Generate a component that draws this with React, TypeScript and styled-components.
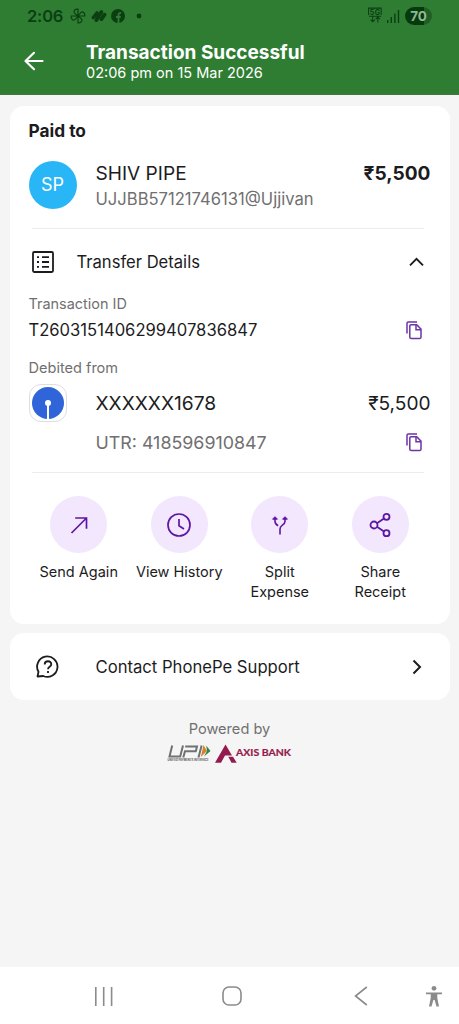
import React from "react";
import styled, { createGlobalStyle } from "styled-components";

const GlobalStyle = createGlobalStyle`
  * { box-sizing: border-box; }
  body { margin: 0; background: #f5f5f5; font-family: Inter, Roboto, sans-serif; }
  svg { display: block; flex: none; }
`;

const Screen = styled.div`
  width: 100%;
  max-width: 459px;
  height: 1024px;
  display: flex;
  flex-direction: column;
  background: #f5f5f5;
  color: #1c1c1e;
`;

const Header = styled.header`
  height: 95px;
  background: #2e7d32;
  border-bottom: 1px solid #47753f;
`;

const StatusBar = styled.div`
  display: flex;
  align-items: center;
  height: 31px;
  padding: 0 27px;
  color: #0b3f12;
`;

const Clock = styled.span`
  width: 43px;
  font-size: 16.5px;
  font-weight: 600;
  letter-spacing: -0.2px;
`;

const StatusIcons = styled.div`
  display: flex;
  align-items: center;
  gap: 5px;
`;

const NotificationIcons = styled(StatusIcons)`
  gap: 4.5px;
`;

const StatusRight = styled(StatusIcons)`
  margin-left: auto;
`;

const Battery = styled.div`
  width: 27px;
  height: 18px;
  border-radius: 9px;
  background: linear-gradient(90deg, #063a0d 70%, #1e5f26 70%);
  color: #8fb892;
  font-size: 13.5px;
  font-weight: 700;
  line-height: 18px;
  text-align: center;
`;

const TitleBar = styled.div`
  display: flex;
  align-items: center;
  height: 60px;
  padding-left: 23px;
  gap: 41px;
  color: #fff;
`;

const TitleText = styled.div`
  display: flex;
  flex-direction: column;
`;

const Text = styled.span<{ $size: number; $lh?: number; $weight?: number; $muted?: boolean }>`
  font-size: ${(p) => p.$size}px;
  line-height: ${(p) => p.$lh ?? 20}px;
  font-weight: ${(p) => p.$weight ?? 400};
  color: ${(p) => (p.$muted ? "#707070" : "inherit")};
  white-space: nowrap;
`;

const Content = styled.main`
  flex: 1;
  display: flex;
  flex-direction: column;
  padding: 11px 9px 0 10px;
  gap: 9px;
`;

const Card = styled.section`
  background: #fff;
  border-radius: 14px;
  padding: 0 19.5px 0 18.5px;
`;

const PaymentCard = styled(Card)`
  height: 518px;
`;

const Row = styled.div<{ $h: number }>`
  display: flex;
  align-items: center;
  height: ${(p) => p.$h}px;
`;

const End = styled.div<{ $inset?: number }>`
  margin-left: auto;
  margin-right: ${(p) => p.$inset ?? 0}px;
`;

const Lead = styled.div<{ $w: number; $inset?: number }>`
  width: ${(p) => p.$w}px;
  padding-left: ${(p) => p.$inset ?? 0}px;
`;

const Avatar = styled.div`
  width: 48px;
  height: 48px;
  border-radius: 50%;
  background: #29b6f6;
  color: #fff;
  font-size: 18px;
  line-height: 48px;
  text-align: center;
`;

const Recipient = styled.div`
  display: flex;
  height: 72px;
  padding-top: 5px;
`;

const RecipientText = styled.div`
  display: flex;
  flex-direction: column;
`;

const Divider = styled.hr`
  height: 1px;
  margin: 0 6.5px 0 3px;
  border: 0;
  background: #ececec;
`;

const BankBadge = styled.div`
  display: grid;
  place-items: center;
  width: 38px;
  height: 38px;
  border: 1px solid #dedede;
  border-radius: 12px;
`;

const Reference = styled(Row)`
  margin-bottom: 3px;
`;

const Actions = styled.div`
  display: grid;
  grid-template-columns: repeat(4, 1fr);
  margin: 23px 0 0;
`;

const Action = styled.div`
  display: flex;
  flex-direction: column;
  align-items: center;
  gap: 9px;
`;

const ActionCircle = styled.div`
  display: grid;
  place-items: center;
  width: 57px;
  height: 57px;
  border-radius: 50%;
  background: #f2e7fc;
  color: #5f16a5;
`;

const ActionLabel = styled.div`
  font-size: 14.5px;
  line-height: 19.5px;
  text-align: center;
  white-space: pre-line;
`;

const SupportCard = styled(Card)`
  display: flex;
  align-items: center;
  height: 67px;
`;

const Powered = styled.div`
  display: flex;
  flex-direction: column;
  align-items: center;
  padding: 9.5px 1px 0 0;
  gap: 5px;
`;

const NavBar = styled.nav`
  display: flex;
  align-items: center;
  height: 57px;
  padding: 1px 15px 0 94px;
  background: #fff;
  color: #8b8b8b;
`;

const NavSlot = styled.div<{ $w: number }>`
  width: ${(p) => p.$w}px;
`;

const CopyIcon = () => (
  <svg width="16" height="19" viewBox="0 0 16 19" fill="none" stroke="#6c35a8" strokeWidth="1.5">
    <path d="M1 12.5V2.2Q1 1 2.2 1H11" />
    <path d="M5 3.8H10.7L15 8.1V16.2Q15 17.6 13.6 17.6H5.2Q3.8 17.6 3.8 16.2V5Q3.8 3.8 5 3.8Z" />
    <path d="M10 4V8.7H15" />
  </svg>
);

const SendIcon = () => (
  <svg width="24" height="24" viewBox="0 0 24 24" fill="none" stroke="currentColor" strokeWidth="1.7">
    <path d="M4.5 20L19.5 5M8.2 5H19.5V15.8" />
  </svg>
);

const HistoryIcon = () => (
  <svg width="26" height="26" viewBox="0 0 26 26" fill="none" stroke="currentColor" strokeWidth="1.7">
    <circle cx="13" cy="13" r="11" />
    <path d="M13 7V13.8L18 17" />
  </svg>
);

const SplitIcon = () => (
  <svg width="20" height="24" viewBox="0 0 20 24" fill="none" stroke="currentColor" strokeWidth="1.6">
    <path d="M5 6V8.2C5 10.6 6.3 11.7 8.1 12.8M15 6V8.2C15 10.6 13.6 11.4 12.2 12.3C10.6 13.3 10 14.3 10 16V21.5" />
    <path d="M5 3.7L2.6 6.2H7.4ZM15 3.7L12.6 6.2H17.4Z" fill="currentColor" strokeWidth="1" />
  </svg>
);

const ShareIcon = () => (
  <svg width="24" height="26" viewBox="0 0 24 26" fill="none" stroke="currentColor" strokeWidth="1.8">
    <circle cx="6" cy="13" r="3.5" />
    <circle cx="18.5" cy="4.8" r="3" />
    <circle cx="18.5" cy="21.2" r="3" />
    <path d="M9 11.2L16 6.6M9 14.8L16 19.4" />
  </svg>
);

const actions = [
  { label: "Send Again", Icon: SendIcon },
  { label: "View History", Icon: HistoryIcon },
  { label: "Split\nExpense", Icon: SplitIcon },
  { label: "Share\nReceipt", Icon: ShareIcon },
];

const Partners = () => (
  <svg width="126" height="20" viewBox="0 0 126 20">
    <g fill="none" stroke="#717174" strokeWidth="2">
      <path d="M5.2 1.5L2.5 12.5H13.2L16 1.5" />
      <path d="M16.3 13.5L18 7.3H28.8L30 2.5H18.2" />
      <path d="M34.6 1.5L31.5 13.5" />
    </g>
    <path d="M36.5 1L40 7L33.8 13Z" fill="#d9822b" />
    <path d="M39.2 1.5L43.5 7L37 12.5L40 7Z" fill="#31834a" />
    <text x="0.5" y="17.4" fontFamily="Inter" fontSize="2.9" fontWeight="700" textLength="41" lengthAdjust="spacingAndGlyphs" fill="#555">UNIFIED PAYMENTS INTERFACE</text>
    <path d="M58.5 0.5L65 11.5H58L54 18.8H48Z" fill="#951b4e" />
    <path d="M61.3 12.8H66L69.7 18.8H64.5Z" fill="#951b4e" />
    <text x="69" y="12" fontFamily="Lato" fontSize="9.6" fontWeight="700" textLength="55" lengthAdjust="spacingAndGlyphs" fill="#951b4e" stroke="#951b4e" strokeWidth="0.2">AXIS BANK</text>
  </svg>
);

export default function App() {
  return (
    <Screen>
      <GlobalStyle />
      <Header>
        <StatusBar>
          <Clock>2:06</Clock>
          <NotificationIcons>
            <svg width="16" height="16" viewBox="0 0 16 16" fill="none" stroke="currentColor" strokeWidth="1.2">
              <path d="M8 8V1.2C4.8.7 3 3.2 4.6 5.2Q5.6 6.2 8 8ZM8 8H14.8C15.3 4.8 12.8 3 10.8 4.6Q9.8 5.6 8 8ZM8 8V14.8C11.2 15.3 13 12.8 11.4 10.8Q10.4 9.8 8 8ZM8 8H1.2C.7 11.2 3.2 13 5.2 11.4Q6.2 10.4 8 8Z" />
            </svg>
            <svg width="16" height="14" viewBox="0 0 16 14" fill="none" stroke="currentColor" strokeWidth="3.6" strokeLinecap="round">
              <path d="M2.4 8.5L6 4M5.3 11.2L10.4 3M10.4 10.2L13.6 5.6" />
            </svg>
            <svg width="14" height="14" viewBox="0 0 14 14">
              <circle cx="7" cy="7" r="7" fill="currentColor" />
              <path d="M7.5 14V6Q7.5 3.8 10 4M5 8H9.7" fill="none" stroke="#2e7d32" strokeWidth="1.8" />
            </svg>
            <svg width="20" height="6" viewBox="0 0 20 6"><circle cx="9" cy="3" r="2.4" fill="currentColor" /></svg>
          </NotificationIcons>
          <StatusRight>
            <svg width="14" height="17" viewBox="0 0 15 17" fill="none" stroke="currentColor" strokeWidth="1.1">
              <path d="M.6 8V.6H14.1V8" />
              <text x="2" y="8" fontFamily="Inter" fontSize="7.6" fontWeight="700" fill="currentColor" stroke="none" textLength="11">5G</text>
              <path d="M1 9.2H14M5 9.5V15.2M2.7 13L5 15.3L7.3 13M10.5 16V10.3M8.2 12.5L10.5 10.2L12.8 12.5" />
            </svg>
            <svg width="13" height="14" viewBox="0 0 13 14" fill="currentColor">
              <path d="M0 11H1.4V14H0ZM3.6 8H5V14H3.6ZM7.2 4.5H8.6V14H7.2ZM10.8 1H12.2V14H10.8Z" />
            </svg>
            <Battery>70</Battery>
          </StatusRight>
        </StatusBar>
        <TitleBar>
          <svg width="22" height="22" viewBox="0 0 22 22" fill="none" stroke="currentColor" strokeWidth="2.2" strokeLinecap="round" strokeLinejoin="round">
            <path d="M19.5 11H3M11 2.8L2.5 11L11 19.2" />
          </svg>
          <TitleText>
            <Text $size={19} $weight={700} $lh={23}>Transaction Successful</Text>
            <Text $size={14.5} $lh={18}>02:06 pm on 15 Mar 2026</Text>
          </TitleText>
        </TitleBar>
      </Header>
      <Content>
        <PaymentCard>
          <Row $h={50}>
            <Text $size={17.3} $weight={700}>Paid to</Text>
          </Row>
          <Recipient>
            <Lead $w={67}><Avatar>SP</Avatar></Lead>
            <RecipientText>
              <Text $size={19.1} $lh={25}>SHIV PIPE</Text>
              <Text $size={16.6} $lh={27} $muted>UJJBB57121746131@Ujjivan</Text>
            </RecipientText>
            <End><Text $size={19.1} $lh={25} $weight={700}>₹5,500</Text></End>
          </Recipient>
          <Divider />
          <Row $h={65}>
            <Lead $w={48} $inset={3}>
              <svg width="22" height="22" viewBox="0 0 22 22" fill="none" stroke="currentColor" strokeWidth="1.8">
                <rect x="1" y="1" width="20" height="20" rx="1.2" />
                <path d="M5 6.2H7M5 11H7M5 15.8H7M10 6.2H17M10 11H17M10 15.8H17" />
              </svg>
            </Lead>
            <Text $size={16.6}>Transfer Details</Text>
            <End $inset={6.5}>
              <svg width="15" height="10" viewBox="0 0 15 10" fill="none" stroke="currentColor" strokeWidth="1.9"><path d="M1 8.3L7.5 1.8L14 8.3" /></svg>
            </End>
          </Row>
          <Row $h={20}><Text $size={14.45} $muted>Transaction ID</Text></Row>
          <Row $h={32}>
            <Text $size={16.6}>T2603151406299407836847</Text>
            <End $inset={8.5}><CopyIcon /></End>
          </Row>
          <Row $h={44}><Text $size={14.55} $muted>Debited from</Text></Row>
          <Row $h={26}>
            <Lead $w={67}>
              <BankBadge>
                <svg width="32" height="32" viewBox="0 0 32 32">
                  <circle cx="16" cy="16" r="16" fill="#2f65d8" />
                  <circle cx="16" cy="16" r="3" fill="#fff" />
                  <path d="M16 16V32" stroke="#fff" strokeWidth="2" />
                </svg>
              </BankBadge>
            </Lead>
            <Text $size={19.2}>XXXXXX1678</Text>
            <End><Text $size={19.1}>₹5,500</Text></End>
          </Row>
          <Reference $h={53}>
            <Lead $w={67} />
            <Text $size={17.85} $muted>UTR: 418596910847</Text>
            <End $inset={8.5}><CopyIcon /></End>
          </Reference>
          <Divider />
          <Actions>
            {actions.map(({ label, Icon }) => (
              <Action key={label}>
                <ActionCircle><Icon /></ActionCircle>
                <ActionLabel>{label}</ActionLabel>
              </Action>
            ))}
          </Actions>
        </PaymentCard>
        <SupportCard>
          <Lead $w={67} $inset={7}>
            <svg width="24" height="24" viewBox="0 0 24 24" fill="none" stroke="currentColor" strokeWidth="1.8">
              <path d="M1.5 21.5L2.5 16.8A10.2 10.2 0 1 1 7.2 21L1.5 21.5Z" strokeLinejoin="round" />
              <path d="M8.7 9.5C8.7 5.2 15.3 5.2 15.3 9.3C15.3 11.9 12 11.7 12 14.2M12 16V18" />
            </svg>
          </Lead>
          <Text $size={16.65}>Contact PhonePe Support</Text>
          <End $inset={9}>
            <svg width="10" height="16" viewBox="0 0 10 16" fill="none" stroke="currentColor" strokeWidth="2"><path d="M1.5 1.5L8 8L1.5 14.5" /></svg>
          </End>
        </SupportCard>
        <Powered>
          <Text $size={14.6} $muted>Powered by</Text>
          <Partners />
        </Powered>
      </Content>
      <NavBar>
        <NavSlot $w={128}>
          <svg width="19" height="19" viewBox="0 0 19 19" stroke="currentColor" strokeWidth="1.6"><path d="M1.8 0V19M9.7 0V19M17.6 0V19" /></svg>
        </NavSlot>
        <NavSlot $w={132}>
          <svg width="20" height="20" viewBox="0 0 20 20" fill="none" stroke="currentColor" strokeWidth="1.6"><rect x="1" y="1" width="18" height="18" rx="6" /></svg>
        </NavSlot>
        <NavSlot $w={71}>
          <svg width="14" height="20" viewBox="0 0 14 20" fill="none" stroke="currentColor" strokeWidth="1.6"><path d="M12.8 1L1.5 10L12.8 19" /></svg>
        </NavSlot>
        <svg width="18" height="22" viewBox="0 0 18 22" fill="currentColor">
          <circle cx="9" cy="3.3" r="2.4" />
          <path d="M1 7.5H17V9.3H12.3V13L14 21.5H11.5L9.6 15H8.4L6.5 21.5H4L5.7 13V9.3H1Z" />
        </svg>
      </NavBar>
    </Screen>
  );
}
